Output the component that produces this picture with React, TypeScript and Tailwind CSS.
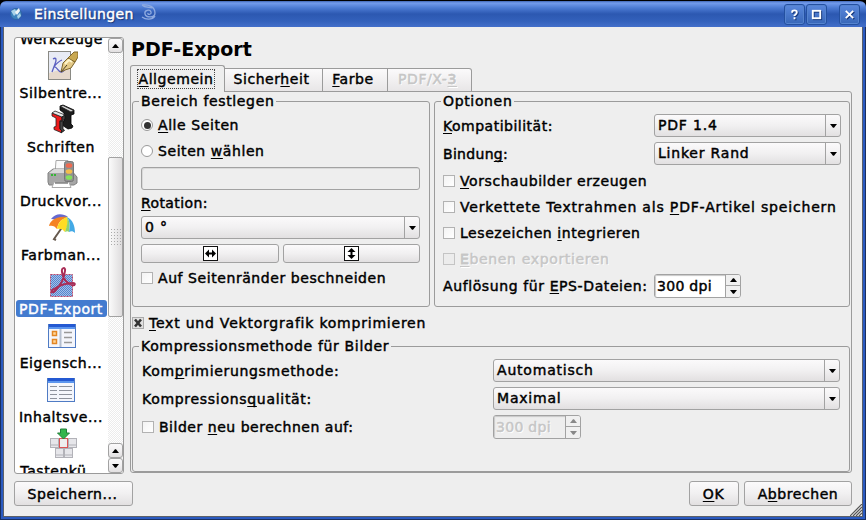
import React from "react";

const btnFace = "bg-gradient-to-b from-[#fbfafb] via-[#f1f0f1] to-[#e2e0e1] border border-[#a2a2a2] rounded-[3px]";

/** Label text; an ampersand marks the following letter as the keyboard mnemonic. */
function Txt({ t, off = false, className = "" }: { t: string; off?: boolean; className?: string }) {
  const i = t.indexOf("&");
  const tone = off ? "text-[#c6c6c6] [text-shadow:1px_1px_0_#fff]" : "";
  return (
    <span className={`whitespace-pre ${tone} ${className}`}>
      {i < 0 ? t : (
        <>
          {t.slice(0, i)}
          <span className="underline decoration-1 underline-offset-2 [text-decoration-skip-ink:none]">{t[i + 1]}</span>
          {t.slice(i + 2)}
        </>
      )}
    </span>
  );
}

function Check({ on = false, off = false }: { on?: boolean; off?: boolean }) {
  return (
    <span className={`flex h-3 w-3 shrink-0 items-center justify-center border ${off ? "border-[#c4c4c4] bg-[#ececec]" : on ? "border-[#aaa] bg-[#e0e0e0]" : "border-[#b2b2b2] bg-gradient-to-br from-[#f3f3f3] to-white"}`}>
      {on && (
        <svg width="10" height="10" viewBox="0 0 10 10"><path d="M2 1.5L8 8.5M8 1.5L2 8.5" stroke="#333" strokeWidth="2.6" /></svg>
      )}
    </span>
  );
}

function Radio({ on = false }: { on?: boolean }) {
  return (
    <span className="flex h-3 w-3 shrink-0 items-center justify-center rounded-full border border-[#9a9a9a] bg-white">
      {on && <span className="h-[7px] w-[7px] rounded-full bg-[#333]" />}
    </span>
  );
}

function Arrow({ up = false, color = "#000" }: { up?: boolean; color?: string }) {
  return (
    <svg width="7" height="4" viewBox="0 0 7 4" className="shrink-0">
      <path d={up ? "M0 4L3 0.3h1L7 4z" : "M0 0L3 3.7h1L7 0z"} fill={color} />
    </svg>
  );
}

function Combo({ value, className = "" }: { value: string; className?: string }) {
  return (
    <div className={`flex h-[23px] ${btnFace} ${className}`}>
      <div className="flex flex-1 items-center pb-px pl-[3px] tracking-[0.8px]"><Txt t={value} /></div>
      <div className="flex w-[15px] items-center justify-center border-l border-[#a2a2a2]"><Arrow /></div>
    </div>
  );
}

function Spin({ off = false }: { off?: boolean }) {
  const c = off ? "#888" : "#000";
  return (
    <div className={`flex h-[24px] shrink-0 overflow-hidden rounded-[3px] border border-[#a2a2a2] ${off ? "w-[88px] bg-[#eeeeee]" : "w-[87px] bg-white"}`}>
      <div className="flex flex-1 items-center pl-[2px] shadow-[inset_1px_1px_1px_#c8c8c8]"><Txt t="300 dpi" off={off} className="tracking-[0.3px]" /></div>
      <div className="flex w-[15px] flex-col border-l border-[#a2a2a2] bg-[#f0f0f0]">
        <div className="flex h-[11px] items-center justify-center border-b border-[#a2a2a2]"><Arrow up color={c} /></div>
        <div className="flex flex-1 items-center justify-center"><Arrow color={c} /></div>
      </div>
    </div>
  );
}

function Group({ title, className, children }: { title: string; className: string; children: React.ReactNode }) {
  return (
    <div className={`flex flex-col rounded-[3px] border border-[#9b9b9b] pl-2 ${className}`}>
      <div className="-mt-[9px] -ml-[2px] flex h-4 items-center self-start bg-[#eeeeee] pr-[2px] pl-[2px] tracking-[0.65px]"><Txt t={title} /></div>
      {children}
    </div>
  );
}

function CheckRow({ t, off = false, className = "h-[26px]", track = "" }: { t: string; off?: boolean; className?: string; track?: string }) {
  return (
    <div className={`flex items-center gap-[5px] ${className}`}><Check off={off} /><Txt t={t} off={off} className={track} /></div>
  );
}

const Hyphen = () => (
  <svg width="32" height="32" viewBox="0 0 32 32">
    <rect x="2.500" y="1.500" width="22" height="28" fill="#e8ebf4" stroke="#8a8a84" />
    <path d="M3 23L24 17v12H3z" fill="#e6d9cc" />
    <path d="M7 9c3-2 4 0 2 5l-3 8M16 10c-3 1-7 5-8 7 3-1 4 5 7 5 2 0 3-1 4-3" fill="none" stroke="#5a5fc0" strokeWidth="1.300" />
    <path d="M15 22l2-9 5-5 7 4-4 6-6 2z" fill="#e3c987" stroke="#7d662d" />
    <path d="M22 8l6-6h4v5l-3 5z" fill="#c9a851" stroke="#80662a" />
    <path d="M15 22l6-7" stroke="#4b4025" fill="none" />
    <path d="M19 14l4-4 3 2" stroke="#fff6cc" fill="none" strokeWidth="2" />
  </svg>
);
const Fonts = () => (
  <svg width="32" height="32" viewBox="0 0 32 32">
    <path d="M14 2l3-1 11 5v4l-3 1v9l2 2-1 2-4 1-6-4 1-3 1-1V9l-4-3z" fill="#1c1c1c" stroke="#000" strokeWidth=".8" />
    <path d="M14.500 2.500l2.500-1 10.500 5-2.500 1.500z" fill="#d8d8d8" stroke="#222" strokeWidth=".8" />
    <path d="M6 9l10 4v4l-2-.500v8l2 2-1 2-7-3V23l2-.5V14l-4-2z" fill="#ee1b1b" stroke="#222" strokeWidth=".8" />
    <path d="M6 9l3-2 10 4-3 2z" fill="#e8e8e8" stroke="#222" strokeWidth=".8" />
    <path d="M16 13l3-2v4l-2 1.500v8l1.500 2L15 29l1-2-2-2v-8l2 .5z" fill="#444" stroke="#111" strokeWidth=".8" />
  </svg>
);
const Printer = () => (
  <svg width="32" height="32" viewBox="0 0 32 32">
    <path d="M10 2.500h12v13H9z" fill="#fafafa" stroke="#aaa" />
    <path d="M2 15l5-4h17l7 8v6l-3 2H3l-1-3z" fill="#a6a6a6" stroke="#808080" />
    <path d="M3 15l5-4h12v4z" fill="#d8d8d8" />
    <path d="M8 24h15l2 5.500H6z" fill="#fff" stroke="#aaa" />
    <path d="M9 25h13" stroke="#444" />
    <rect x="18.500" y="3.500" width="9" height="20" rx="2" fill="#909090" stroke="#777" />
    <ellipse cx="23" cy="7.500" rx="3.300" ry="2.300" fill="#ef6a50" />
    <ellipse cx="23" cy="13.500" rx="3.300" ry="2.300" fill="#f3bd4b" />
    <ellipse cx="23" cy="19.500" rx="3.300" ry="2.300" fill="#84e05c" />
    <path d="M5 17h2M8 17h2" stroke="#35b535" strokeWidth="2" />
  </svg>
);
const Umbrella = () => (
  <svg width="32" height="32" viewBox="0 0 32 32">
    <path d="M17 14L8 27l2 1" fill="none" stroke="#66594d" strokeWidth="2" />
    <path d="M5 7C9 1 17 1 22 5L15 8z" fill="#6669cf" />
    <path d="M3 14c1-5 7-10 18-9-6 2-9 6-10 12-2-3-5-4-8-3z" fill="#f58223" />
    <path d="M11 17c1-6 4-10 10-12 2 5 0 10-2 15-2-3-5-4-8-3z" fill="#ffdc24" />
    <path d="M21 5c3 4 3 9 2 15-1-1-2-1-4 0 2-6 3-10 2-15z" fill="#8fd26d" />
    <path d="M21 5c6 3 8 9 8 16-2-2-4-2-6-1 1-6 1-11-2-15z" fill="#43a9e5" />
  </svg>
);
const Pdf = () => (
  <svg width="32" height="32" viewBox="0 0 32 32">
    <defs>
      <pattern id="weave" width="2" height="2" patternUnits="userSpaceOnUse">
        <rect width="2" height="2" fill="#a4c0e8" /><rect width="1" height="1" fill="#5584cd" /><rect x="1" y="1" width="1" height="1" fill="#5584cd" />
      </pattern>
    </defs>
    <rect x="4.500" y="8.500" width="22" height="22" fill="url(#weave)" stroke="#bd4868" strokeDasharray="2 1" />
    <path d="M16 6c-1-5 4-5 3-1-1 8-5 15-10 20-3 3-5 0-1-2 6-4 13-6 19-6 3 0 2 3-1 2-6-2-9-6-10-13z" fill="none" stroke="#a92d57" strokeWidth="2" />
  </svg>
);
const Props = () => (
  <svg width="32" height="32" viewBox="0 0 32 32">
    <rect x="2.500" y="4.500" width="27" height="23" fill="#f4f6fc" stroke="#4f7bc4" />
    <path d="M3 4h26v5H3z" fill="#5b95ee" /><path d="M3 4h26v3H3z" fill="#2459d2" />
    <path d="M14.500 9v18" stroke="#b4bece" strokeWidth="2" />
    <rect x="6.500" y="11.500" width="4" height="4" fill="#ffd69b" stroke="#e38624" strokeWidth="1.500" />
    <rect x="6.500" y="19.500" width="4" height="4" fill="#ffd69b" stroke="#e38624" strokeWidth="1.500" />
    <path d="M18 12.500h8M18 17.500h8M18 22.500h8" stroke="#999" strokeWidth="1.500" />
  </svg>
);
const Toc = () => (
  <svg width="32" height="32" viewBox="0 0 32 32">
    <rect x="1.500" y="4.500" width="27" height="23" fill="#f4f6fc" stroke="#4f7bc4" />
    <path d="M2 4h26v5H2z" fill="#5b95ee" /><path d="M2 4h26v3H2z" fill="#2459d2" />
    <path d="M4 12.500h7M13 12.500h13M4 16.500h7M13 16.500h13M4 20.500h7M13 20.500h13M4 24.500h7M13 24.500h13" stroke="#8d929d" />
  </svg>
);
const Keys = () => (
  <svg width="32" height="32" viewBox="0 0 32 32">
    <g fill="#e6e6ea" stroke="#b2b2b8">
      <rect x="4.500" y="10.500" width="8" height="9" /><rect x="22.500" y="10.500" width="8" height="9" />
      <rect x="9.500" y="20.500" width="8" height="9" /><rect x="18.500" y="20.500" width="8" height="9" />
      <path d="M5 17h7M23 17h7M10 27h7M19 27h7" />
    </g>
    <rect x="13.500" y="10.500" width="8" height="9" fill="#eee" stroke="#dc5555" />
    <path d="M14.500 1h6v4h3l-6 6-6-6h3z" fill="#35b54c" stroke="#23803a" />
  </svg>
);

const items: { label: string; icon: () => React.JSX.Element; sel?: boolean }[] = [
  { label: "Silbentre...", icon: Hyphen },
  { label: "Schriften", icon: Fonts },
  { label: "Druckvor...", icon: Printer },
  { label: "Farbman...", icon: Umbrella },
  { label: "PDF-Export", icon: Pdf, sel: true },
  { label: "Eigensch...", icon: Props },
  { label: "Inhaltsve...", icon: Toc },
  { label: "Tastenkü...", icon: Keys },
];

function ScrollButton({ up = false }: { up?: boolean }) {
  return <div className={`flex h-[15px] shrink-0 items-center justify-center ${btnFace}`}><Arrow up={up} /></div>;
}

function Sidebar() {
  return (
    <div className="flex h-[437px] w-[110px] shrink-0 overflow-hidden rounded-[3px] border border-[#9a9a9a] bg-white">
      <div className="flex w-[93px] shrink-0 flex-col overflow-hidden">
        <div className="-mt-[8px] flex h-[17px] shrink-0 items-center justify-center"><Txt t="Werkzeuge" /></div>
        <div className="h-[3px] shrink-0" />
        {items.map(({ label, icon: Icon, sel }) => (
          <div key={label} className="flex h-[54px] shrink-0 flex-col items-center">
            <div className="h-8"><Icon /></div>
            <div className={`mt-[2px] flex h-[17px] items-center justify-center pr-px ${sel ? "w-[91px] rounded-[3px] bg-[#437bcf] text-white" : ""}`}>
              <Txt t={label} />
            </div>
          </div>
        ))}
      </div>
      <div className="flex w-[15px] shrink-0 flex-col bg-[#f4f4f4]">
        <ScrollButton up />
        <div className="h-[104px] shrink-0 bg-[repeating-conic-gradient(#ffffff_0_25%,#ececec_0_50%)] bg-[length:2px_2px]" />
        <div className="flex h-[160px] shrink-0 items-center justify-center rounded-[2px] border border-[#a2a2a2] bg-gradient-to-r from-[#fbfbfb] to-[#dedcdd]">
          <div className="grid grid-cols-[repeat(4,1px)] gap-[2px]">
            {Array.from({ length: 24 }, (_, k) => <span key={k} className="h-px w-px bg-[#aaa]" />)}
          </div>
        </div>
        <div className="flex-1 bg-[repeating-conic-gradient(#ffffff_0_25%,#ececec_0_50%)] bg-[length:2px_2px]" />
        <ScrollButton up />
        <ScrollButton />
      </div>
    </div>
  );
}

function Tab({ t, className, off = false }: { t: string; className: string; off?: boolean }) {
  return (
    <div className={`mt-[3px] flex h-[24px] items-center justify-center border border-l-0 border-[#9b9b9b] bg-gradient-to-b from-[#fbfafb] to-[#e8e6e7] pr-1 pb-[2px] ${className}`}>
      <Txt t={t} off={off} />
    </div>
  );
}

function TitleButton({ children, className = "" }: { children: React.ReactNode; className?: string }) {
  return (
    <div className={`flex h-[21px] w-[21px] items-center justify-center rounded-[3px] border border-[#2450a0] bg-gradient-to-b from-[#5a88dd] to-[#3867b8] shadow-[inset_0_0_0_1px_#5583cf] ${className}`}>
      <svg width="13" height="13" viewBox="0 0 14 14" fill="none" stroke="#fff" strokeWidth="2" className="drop-shadow-[1px_1px_0_#17387b]">{children}</svg>
    </div>
  );
}

function FlipButton({ vertical = false, className }: { vertical?: boolean; className: string }) {
  return (
    <div className={`flex h-[19px] items-center justify-center ${btnFace} ${className}`}>
      <svg width="15" height="15" viewBox="0 0 15 15" className={vertical ? "rotate-90" : ""}>
        <rect x=".5" y=".5" width="14" height="14" fill="#fff" stroke="#111" />
        <path d="M2 7.500L6 3.500v3h3v-3l4 4-4 4v-3H6v3z" fill="#000" />
      </svg>
    </div>
  );
}

export default function App() {
  return (
    <div className="relative flex h-[520px] w-[866px] flex-col overflow-hidden bg-black font-['DejaVu_Sans',sans-serif] text-[14px] leading-4 tracking-[0.57px] text-black [-webkit-text-stroke:0.45px_currentColor]">
      <div className="mt-px flex h-[26px] shrink-0 items-center rounded-t-[6px] bg-[linear-gradient(#3f66b4_0px,#739cec_2px,#4b7ad2_7px,#2c58b1_13px,#3361bb_20px,#436fca_26px)] pr-[6px] pl-[9px]">
        <svg width="14" height="14" viewBox="0 0 14 14">
          <circle cx="7" cy="7" r="5.500" fill="#3d83bd" stroke="#2f64a5" />
          <path d="M2 4l4-2 2 4-3 3zM8 9l3-3 1 3-3 3z" fill="#a8d2e8" /><path d="M6 5l4-4 1 3-3 4z" fill="#f0f5f5" />
        </svg>
        <Txt t="Einstellungen" className="ml-[11px] tracking-[0.37px] text-white [text-shadow:1px_1px_1px_#102a66]" />
        <svg width="18" height="18" viewBox="0 0 18 18" className="-mt-1 ml-[6px]" fill="none" stroke="#8fabe0" strokeWidth="1.300">
          <path d="M2 2c7-1 13 2 13 8 0 5-9 5-10 1-1-4 5-5 6-2s-4 3-3 1M2 2c3 3 7 2 10 3M2 14c4 3 10 3 13-1" />
        </svg>
        <div className="flex-1" />
        <TitleButton><path d="M4.500 5V4q0-1.500 2.500-1.500T9.500 4.500 7 8V8.500M7 10v2" /></TitleButton>
        <TitleButton className="ml-[1px]"><rect x="3" y="3" width="8" height="8" /></TitleButton>
        <TitleButton className="ml-[12px]"><path d="M3 3l8 8M11 3l-8 8" /></TitleButton>
      </div>

      <div className="flex flex-1 border-x border-b border-[#1a2f60]">
        <div className="flex flex-1 border-r-[2px] border-b-[2px] border-l-[2px] border-[#2a5ac0]">
          <div className="flex flex-1 flex-col border-x border-b border-[#5c6068] bg-[#eeeeee] pt-[10px] pl-[10px]">
            <div className="flex h-[437px] gap-[6px]">
              <Sidebar />
              <div className="flex w-[722px] flex-col">
                <div className="flex h-[28px] items-center pl-px pb-[5px] text-[19px] font-bold tracking-[0.05px] [-webkit-text-stroke:0px]">PDF-Export</div>
                <div className="z-10 -mb-px flex h-[27px] shrink-0">
                  <div className="flex w-[95px] items-center justify-center rounded-t-[3px] border border-b-0 border-[#9b9b9b] bg-[#eeeeee] pr-[3px]">
                    <div className="flex h-[20px] w-[78px] items-center justify-center border border-dotted border-[#444] pb-px"><Txt t="&Allgemein" /></div>
                  </div>
                  <Tab t="Sicher&heit" className="w-[98px]" />
                  <Tab t="&Farbe" className="w-[65px]" />
                  <Tab t="PDF/X-&3" off className="w-[84px] rounded-tr-[3px]" />
                </div>
                <div className="flex h-[382px] flex-col rounded-[3px] rounded-tl-none border border-[#9b9b9b] px-px pt-[9px]">
                  <div className="flex gap-[4px]">
                    <Group title="Bereich festlegen" className="h-[206px] w-[298px]">
                      <div className="mt-[3px] flex h-[26px] items-center gap-[5px]"><Radio on /><Txt t="&Alle Seiten" /></div>
                      <div className="flex h-[26px] items-center gap-[5px]"><Radio /><Txt t="Seiten &wählen" /></div>
                      <div className="mt-[3px] h-[23px] w-[279px] shrink-0 rounded-[3px] border border-[#a2a2a2] shadow-[inset_1px_1px_0_#dadada]" />
                      <div className="flex h-[26px] shrink-0 items-center"><Txt t="&Rotation:" className="tracking-[0.4px]" /></div>
                      <Combo value="0 °" className="w-[279px] shrink-0" />
                      <div className="mt-[5px] flex gap-[4px]">
                        <FlipButton className="w-[138px]" />
                        <FlipButton vertical className="w-[137px]" />
                      </div>
                      <CheckRow t="Auf Seitenränder beschneiden" className="h-[30px]" />
                    </Group>
                    <Group title="Optionen" className="h-[206px] w-[416px]">
                      <div className="mt-[5px] flex h-[23px] items-center"><Txt t="&Kompatibilität:" className="w-[211px] tracking-[0.5px]" /><Combo value="PDF 1.4" className="w-[187px]" /></div>
                      <div className="mt-[5px] flex h-[23px] items-center"><Txt t="Bindun&g:" className="w-[211px] tracking-[0.3px]" /><Combo value="Linker Rand" className="w-[187px]" /></div>
                      <div className="h-[3px]" />
                      <CheckRow t="&Vorschaubilder erzeugen" />
                      <CheckRow t="Verkettete Textrahmen als &PDF-Artikel speichern" track="tracking-[0.82px]" />
                      <CheckRow t="Lesezeichen &integrieren" />
                      <CheckRow t="&Ebenen exportieren" off track="tracking-[0.65px]" />
                      <div className="mt-[2px] flex h-[24px] items-center"><Txt t="Auflösung für &EPS-Dateien:" className="w-[211px] tracking-[0.6px]" /><Spin /></div>
                    </Group>
                  </div>
                  <div className="flex h-[31px] items-center gap-[5px]"><Check on /><Txt t="&Text und Vektorgrafik komprimieren" className="tracking-[0.78px]" /></div>
                  <Group title="Kompressionsmethode für Bilder" className="mt-[8px] h-[126px] w-[718px]">
                    <div className="ml-px mt-[5px] flex h-[23px] items-center"><Txt t="Kom&primierungsmethode:" className="w-[351px] tracking-[0.68px]" /><Combo value="Automatisch" className="w-[347px]" /></div>
                    <div className="ml-px mt-[5px] flex h-[23px] items-center"><Txt t="Kompressions&qualität:" className="w-[351px] tracking-[0.7px]" /><Combo value="Maximal" className="w-[347px]" /></div>
                    <div className="ml-px mt-[5px] flex h-[24px] items-center">
                      <div className="w-[351px]"><CheckRow t="Bilder &neu berechnen auf:" className="h-[23px]" track="tracking-[0.52px]" /></div>
                      <Spin off />
                    </div>
                  </Group>
                </div>
              </div>
            </div>
            <div className="mt-[7px] flex h-[25px] pr-[10px]">
              <div className={`flex w-[119px] items-center justify-center pr-[2px] ${btnFace}`}><Txt t="Speichern..." /></div>
              <div className="flex-1" />
              <div className={`flex w-[50px] items-center justify-center pr-px ${btnFace}`}><Txt t="&OK" /></div>
              <div className={`ml-[5px] flex w-[108px] items-center justify-center ${btnFace}`}><Txt t="A&bbrechen" /></div>
            </div>
          </div>
        </div>
      </div>
      <svg width="12" height="12" viewBox="0 0 12 12" className="absolute right-[4px] bottom-[4px]" stroke="#555" strokeWidth="1.200">
        <path d="M0 12L12 0M3 12l9-9M6 12l6-6M9 12l3-3" />
      </svg>
    </div>
  );
}
